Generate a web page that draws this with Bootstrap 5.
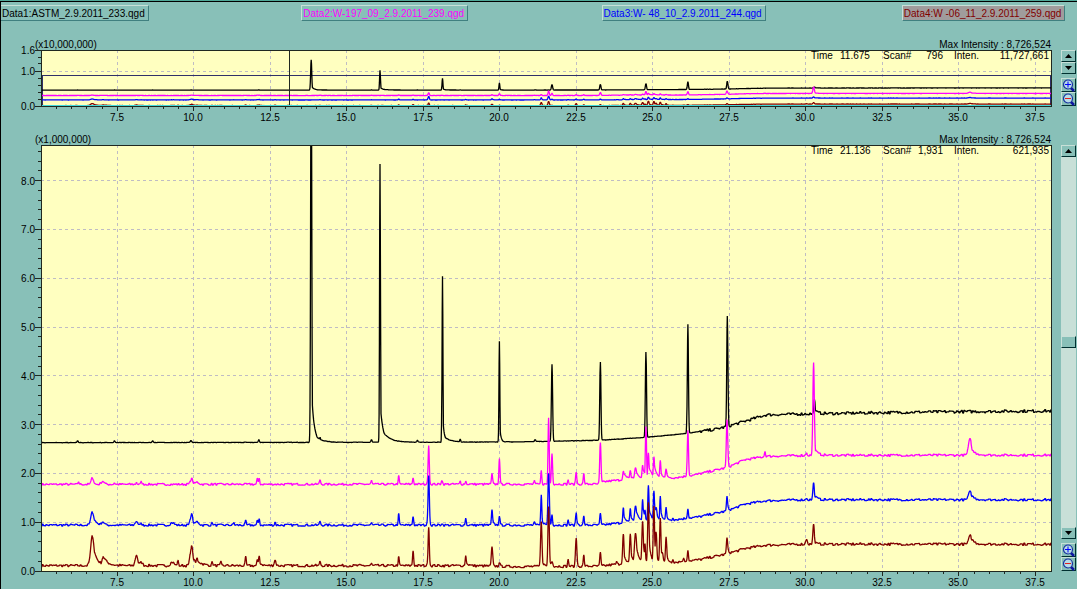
<!DOCTYPE html>
<html lang="en">
<head>
<meta charset="utf-8">
<meta name="viewport" content="width=device-width, initial-scale=1">
<title>Chromatogram comparison</title>
<link href="https://cdn.jsdelivr.net/npm/bootstrap@5.3.0/dist/css/bootstrap.min.css" rel="stylesheet">
<style>
  :root { --panel: #88c0b8; --light: #c8e0d8; --shade: #408080; --paper: #ffffc0; }
  body {
    background: var(--panel); color: #000;
    font: 10px/14px "Liberation Sans", Arial, sans-serif;
    border-top: 1px solid #50a898; min-height: 380px;
  }
  .viewer { border-top: 1px solid #000; border-left: 1px solid #000; min-height: 0; }
  .file-tabs { display: grid; grid-template-columns: 12fr 12fr 12fr 7fr; height: 34px; padding-top: 3px; }
  .file-tab {
    justify-self: start; height: 16px; padding: 0 3px 0 1px; line-height: 15px; white-space: nowrap;
    background: var(--panel); border: 1px solid; border-color: var(--light) var(--shade) var(--shade) var(--light);
  }
  .file-tab:first-child { border-left-width: 0; }
  .file-tab.selected { background: #a09c9c; }
  .ink-1 { color: #000; } .ink-2 { color: #f0f; } .ink-3 { color: #00f; } .ink-4 { color: #800000; }
  .chart-caption { padding: 0 1px 0 34px; height: 14px; line-height: 18px; }
  .chart-area { min-width: 0; }
  .plot-box { min-height: 0; }
  .plot-box svg.plot { width: 100%; height: 100%; display: block; overflow: visible; }
  .overview .plot-box { height: 74px; }
  .detail { margin-top: 7px; }
  .readout {
    position: absolute; top: 0; right: 3px; line-height: 12px;
    display: grid; grid-template-columns: 29px 43px 29px 31px 106px;
  }
  .readout .inten { padding-left: 11px; }
  .side { width: 16px; margin-left: 9px; padding: 14px 1px 18px 0; }
  .bevel {
    display: flex; align-items: center; justify-content: center; padding: 0; width: 15px; flex: none;
    background: var(--panel); border: 1px solid; border-color: var(--light) #003030 #003030 var(--light);
  }
  .step { height: 12px; }
  .lens { height: 14px; }
  .bevel svg { display: block; }
  .track { background: var(--light); width: 15px; min-height: 0; }
  svg text { font: 10px "Liberation Sans", Arial, sans-serif; }
  .gridline { stroke: #bfbcc4; stroke-dasharray: 3 3; }
  .axis { stroke: #202820; fill: none; }
  .trace { fill: none; stroke-width: 1.3; stroke-linejoin: bevel; }
</style>
</head>
<body class="d-flex flex-column vh-100 m-0 overflow-hidden">
<svg width="0" height="0" class="position-absolute" aria-hidden="true">
  <symbol id="lens-shape" viewBox="0 0 13 13">
    <path d="M8.500 8.500 12 12" stroke="#1018a0" stroke-width="2.500"/>
    <circle cx="6" cy="5.500" r="4.500" fill="#b8dce8" stroke="#1830a0" stroke-width="1.200"/>
  </symbol>
  <symbol id="arrow-up" viewBox="0 0 7 4"><path d="M0 4 3.500 0 7 4z"/></symbol>
  <symbol id="arrow-down" viewBox="0 0 7 4"><path d="M0 0h7L3.500 4z"/></symbol>
</svg>

<main class="viewer d-flex flex-column flex-grow-1">
  <nav class="file-tabs" aria-label="Data files">
    <button type="button" class="file-tab ink-1">Data1:ASTM_2.9.2011_233.qgd</button>
    <button type="button" class="file-tab ink-2">Data2:W-197_09_2.9.2011_239.qgd</button>
    <button type="button" class="file-tab ink-3">Data3:W- 48_10_2.9.2011_244.qgd</button>
    <button type="button" class="file-tab ink-4 selected">Data4:W -06_11_2.9.2011_259.qgd</button>
  </nav>

  <section class="overview d-flex" aria-label="Overview">
    <div class="chart-area flex-grow-1 d-flex flex-column">
      <div class="chart-caption d-flex justify-content-between"><span>(x10,000,000)</span><span>Max Intensity : 8,726,524</span></div>
      <div class="plot-box position-relative">
        <svg class="plot" id="overview"></svg>
        <div class="readout"><span>Time</span><span>11.675</span><span>Scan#</span><span class="text-end">796</span>
          <span class="inten d-flex justify-content-between"><span>Inten.</span><span>11,727,661</span></span></div>
      </div>
    </div>
    <div class="side d-flex flex-column">
      <button type="button" class="bevel step" aria-label="Scale up"><svg width="7" height="4"><use href="#arrow-up"/></svg></button>
      <button type="button" class="bevel step" aria-label="Scale down"><svg width="7" height="4"><use href="#arrow-down"/></svg></button>
      <button type="button" class="bevel lens mt-auto" aria-label="Zoom in"><svg width="13" height="13"><use href="#lens-shape"/><path d="M3 5.500h6M6 2.500v6" stroke="#00f"/></svg></button>
      <button type="button" class="bevel lens" aria-label="Zoom out"><svg width="13" height="13"><use href="#lens-shape"/><path d="M3 5.500h6" stroke="#e02020"/></svg></button>
    </div>
  </section>

  <section class="detail d-flex flex-grow-1 plot-box" aria-label="Detail">
    <div class="chart-area flex-grow-1 d-flex flex-column">
      <div class="chart-caption d-flex justify-content-between"><span>(x1,000,000)</span><span>Max Intensity : 8,726,524</span></div>
      <div class="plot-box position-relative flex-grow-1">
        <svg class="plot position-absolute" id="detail"></svg>
        <div class="readout"><span>Time</span><span>21.136</span><span>Scan#</span><span class="text-end">1,931</span>
          <span class="inten d-flex justify-content-between"><span>Inten.</span><span>621,935</span></span></div>
      </div>
    </div>
    <div class="side d-flex flex-column">
      <button type="button" class="bevel step" aria-label="Scroll up"><svg width="7" height="4"><use href="#arrow-up"/></svg></button>
      <div class="track flex-grow-1 d-flex flex-column" role="scrollbar" aria-label="Intensity scale" aria-controls="detail" aria-orientation="vertical" aria-valuemin="0" aria-valuemax="100" aria-valuenow="50">
        <div class="flex-grow-1"></div>
        <button type="button" class="bevel step" aria-label="Scale handle"></button>
        <div class="flex-grow-1"></div>
      </div>
      <button type="button" class="bevel step" aria-label="Scroll down"><svg width="7" height="4"><use href="#arrow-down"/></svg></button>
      <button type="button" class="bevel lens mt-1" aria-label="Zoom in"><svg width="13" height="13"><use href="#lens-shape"/><path d="M3 5.500h6M6 2.500v6" stroke="#00f"/></svg></button>
      <button type="button" class="bevel lens" aria-label="Zoom out"><svg width="13" height="13"><use href="#lens-shape"/><path d="M3 5.500h6" stroke="#e02020"/></svg></button>
    </div>
  </section>
</main>

<script src="https://cdn.jsdelivr.net/npm/bootstrap@5.3.0/dist/js/bootstrap.bundle.min.js"></script>
<script>
// base: [time, level]; peaks: [time, apex, width, tail height, tail length]
const series = [
  { color: '#000', lift: 0.19, noise: [0.004, 0.028],
    base: [[5,2.63],[19,2.64],[21,2.65],[23.3,2.68],[24.8,2.74],[26.1,2.82],[27,2.9],[27.42,2.96],[28,3.07],[28.7,3.2],[30,3.22],[32,3.24],[34,3.26],[38,3.28]],
    peaks: [[6.2,2.67],[7.4,2.67],[8.65,2.67],[9.9,2.68],[12.12,2.69],[13.83,11.3,.018,.8,.08],[13.9,2.64,.03,.14,.2],[14.12,2.74],[15.8,2.69],[16.08,8.34,.014,.6,.09],[16.1,2.64,.03,.24,.22],[17.3,2.68],[18.12,6.04,.014,.35,.05],[18.14,2.64,.03,.1,.2],[18.7,2.7],[19.98,4.71,.014,.2,.04],[21.15,2.69],[21.7,4.24,.02],[23.28,4.28,.018],[24.77,4.49,.018],[26.14,5.06,.018],[27.43,5.22,.018],[30.28,3.54,.018,.05,.1]] },
  { color: '#f0f', lift: 0.122, noise: [0.02, 0.022],
    base: [[5,1.775],[23.2,1.78],[23.4,1.83],[24,1.87],[25.7,1.91],[26.3,1.96],[27,2.06],[27.42,2.12],[28,2.28],[28.7,2.35],[30,2.37],[38,2.375]],
    peaks: [[6.23,1.83],[6.68,1.91,.04],[7.02,1.84,.05],[7.4,1.81],[8.12,1.82],[8.28,1.84],[9.92,1.89,.04],[10.1,1.82,.06],[12.07,1.89],[12.13,1.9],[14.12,1.87],[15.8,1.85],[16.69,1.94],[17.16,1.91],[17.67,2.59,.02],[18.1,1.87],[18.7,1.84],[18.88,1.84],[19.74,1.99],[19.98,2.32],[21.12,1.84],[21.35,2.05],[21.59,3.14,.018],[21.7,2.42,.02],[22.23,1.86],[22.49,2.04],[22.74,1.99],[23.28,2.62,.02],[24.03,2.06,.02,.1,.1],[24.26,2.05,.02,.05,.1],[24.43,2.12,.03,.1,.1],[24.66,2.18,.02,.15,.1],[24.77,2.97],[24.85,2.42,.02,.2,.1],[25.03,2.35,.02,.2,.08],[25.24,2.28,.02,.1,.06],[25.43,2.08,.02,.05,.06],[26.14,2.9,.02],[27.42,3.1,.022],[28.66,2.45],[30.02,2.43],[30.25,4.26,.024,.12,.1],[35.36,2.7,.05,.08,.15]] },
  { color: '#00f', lift: 0.08, noise: [0.022, 0.022],
    base: [[5,.94],[23.3,.94],[24,.99],[25.7,1.05],[26.5,1.11],[27.42,1.23],[28,1.37],[28.7,1.44],[30,1.46],[38,1.46]],
    peaks: [[6.68,1.21,.05,.08,.1],[7.02,1.01,.05],[8.12,1.02,.04],[8.28,.98],[9.29,.99,.06],[9.92,1.16,.04],[10.1,1.01,.06],[10.6,.99],[11.3,.99],[11.69,1.02],[12.07,1.03],[12.13,1.07],[12.65,1],[14.12,1.02],[15.8,.98],[16.69,1.16],[17.16,1.12],[17.67,1.98,.022],[18.1,.98],[18.88,1.08],[19.74,1.25,.018,.05,.05],[19.98,1.14],[21.12,.99],[21.35,1.55,.018,.1,.05],[21.59,2,.022],[21.7,1.17],[22.23,1.04],[22.49,1.21,.018,.04,.05],[22.74,1.12],[23.28,1.17],[24.03,1.32,.018,.1,.06],[24.26,1.27,.018,.1,.06],[24.43,1.34,.03,.15,.1],[24.66,1.48,.018,.2,.06],[24.74,1.24],[24.85,1.75,.02,.2,.07],[25.03,1.65,.02,.25,.07],[25.1,1.3,.03],[25.24,1.55,.018,.15,.05],[25.43,1.29,.018,.05,.05],[25.65,1.1],[26.14,1.29],[27.42,1.53,.018,.05,.04],[30.02,1.5],[30.25,1.8,.024,.08,.08],[35.36,1.62,.05,.06,.1]] },
  { color: '#800000', lift: 0, noise: [0.024, 0.024],
    base: [[5,.11],[19,.11],[20.5,.09],[23.3,.1],[24.1,.16],[25.7,.18],[26.5,.23],[27.42,.35],[28,.46],[28.7,.53],[30,.55],[38,.55]],
    peaks: [[6.68,.72,.055,.2,.12],[7.02,.27,.04,.12,.14],[8.12,.33,.04,.05,.1],[8.28,.18,.04],[9.29,.18,.06],[9.47,.22],[9.92,.5,.045,.1,.1],[10.1,.26,.03,.08,.15],[10.6,.19],[10.88,.18],[11.69,.28],[12.07,.22],[12.13,.31,.02,.05,.08],[12.65,.22,.03],[14.12,.2],[15.8,.15],[16.69,.28],[17.16,.42,.018],[17.67,.92,.02],[18.88,.31,.018,.06,.06],[19.74,.49,.022],[19.98,.19],[21.35,1,.024,.1,.05],[21.59,1.32,.022,.1,.04],[21.7,.21,.03],[22.23,.23],[22.49,.69,.022],[22.74,.32],[23.28,.37],[23.81,.18],[24.03,.78,.022,.12,.05],[24.26,.75,.022,.15,.06],[24.43,.78,.034,.2,.09],[24.66,1.03,.024,.25,.05],[24.74,.55],[24.85,1.4,.024,.3,.05],[25.03,1.34,.022,.3,.05],[25.1,.8,.024],[25.24,1.1,.022,.2,.04],[25.3,.4,.03],[25.43,.68,.02,.1,.05],[25.65,.25],[25.99,.26],[26.14,.44],[27.42,.68,.02,.06,.04],[30.02,.66,.026],[30.25,.95,.024,.05,.04],[35.36,.71,.045,.08,.1]] }
];
const T0 = 5, T1 = 38.04, LEFT = 40, BOTTOM = 18;

function level(base, t) {
  let i = 1;
  while (i < base.length - 1 && base[i][0] < t) i++;
  const [a, b] = [base[i - 1], base[i]];
  return a[1] + (b[1] - a[1]) * (t - a[0]) / (b[0] - a[0]);
}
function samples(s) {
  let seed = 7, n = 0, out = [];
  const rnd = () => (seed = (seed * 16807) % 2147483647) / 2147483647 * 2 - 1;
  for (let k = 0; k <= 3304; k++) {
    const t = T0 + k / 100, b = level(s.base, t);
    if (k % 4 === 0) n = rnd() * (t > 26.5 ? s.noise[1] : s.noise[0]);
    let v = 0;
    for (const [pt, apex, w = .018, tail = 0, len = .1] of s.peaks) {
      if (Math.abs(t - pt) > 1.5) continue;
      v = Math.max(v, (apex - level(s.base, pt)) * Math.exp(-((t - pt) ** 2) / (2 * w * w)));
      if (tail && t > pt) v = Math.max(v, tail * Math.exp(-(t - pt - w * 2) / len));
    }
    out.push([t, b + n + v]);
  }
  return out;
}
series.forEach(s => s.points = samples(s));

function draw(id, opt) {
  const svg = document.getElementById(id), box = svg.parentElement, W = box.clientWidth, H = box.clientHeight;
  const x1 = W, y1 = H - BOTTOM;
  const X = t => LEFT + (t - T0) / (T1 - T0) * (x1 - LEFT);
  const Y = v => y1 - v / opt.max * y1;
  const px = n => Math.floor(n) + .5;
  const line = (c, a, b, d, e) => `<line class="${c}" x1="${a}" y1="${b}" x2="${d}" y2="${e}"/>`;
  let h = `<clipPath id="${id}-clip"><rect x="${LEFT}" y="0" width="${x1 - LEFT}" height="${y1}"/></clipPath>`;
  h += `<g shape-rendering="crispEdges"><rect x="${LEFT}" y="0" width="${x1 - LEFT}" height="${y1}" fill="#ffffc0"/>`;
  let labels = '';
  for (let t = 5.5; t < 38; t += .5) {
    const major = t % 2.5 === 0, x = px(X(t));
    if (major) {
      h += line('gridline', x, 0, x, y1);
      labels += `<text x="${Math.floor(X(t))}" y="${y1 + 15}" text-anchor="middle">${t.toFixed(1)}</text>`;
    }
    h += line('axis', x, y1, x, y1 + (major ? 5 : 3));
  }
  for (let k = 0; k * .2 <= opt.max + .001; k++) {
    const v = k * .2, y = px(Y(v)), major = opt.labels.includes(k);
    if (k % 5 === 0 && k) h += line('gridline', LEFT, y, x1, y);
    h += line('axis', LEFT - (major ? 6 : 3), y, LEFT, y);
    if (major) labels += `<text x="34" y="${Math.round(Y(v)) + 4}" text-anchor="end">${v.toFixed(1)}</text>`;
  }
  if (opt.overview) h += `<rect x="${LEFT + 1.5}" y="${px(Y(.873))}" width="${x1 - LEFT - 3}" height="${Math.round(y1 - Y(.873)) - 1}" fill="none" stroke="#303068"/>`;
  h += `</g><g clip-path="url(#${id}-clip)">`;
  for (const s of series) {
    const f = opt.overview ? v => v / 10 + s.lift : v => v;
    h += `<polyline class="trace" stroke="${s.color}" points="${s.points.map(([t, v]) => X(t).toFixed(1) + ',' + Y(f(v)).toFixed(1)).join(' ')}"/>`;
  }
  h += '</g><g shape-rendering="crispEdges">';
  if (opt.overview) {
    h += line('axis', px(X(13.11)), 0, px(X(13.11)), y1);
    h += `<path d="M${LEFT + 1} ${y1 - .5}H${x1 - 1}" stroke="#40d8d8"/>`;
  }
  h += `<path class="axis" d="M${LEFT + .5} ${y1 + .5}V.500H${x1 - .5}V${y1 + .5}z"/>`;
  svg.innerHTML = h + '</g>' + labels;
}
function render() {
  draw('overview', { max: 1.6, labels: [0, 5, 8], overview: true });
  draw('detail', { max: 8.73, labels: [0, 5, 10, 15, 20, 25, 30, 35, 40] });
}
render();
addEventListener('resize', render);
</script>
</body>
</html>
